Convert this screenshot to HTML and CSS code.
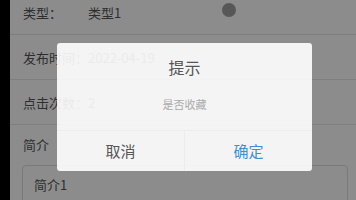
FILE: index.html
```html
<!DOCTYPE html>
<html lang="zh">
<head>
    <meta charset="UTF-8">
    <meta name="viewport" content="width=device-width, initial-scale=1.0">
    <title>详情</title>
    <link rel="stylesheet" href="styles.css">
</head>
<body>
    <div class="page">
        <div class="info">
            <div class="row">
                <span class="label">类型：</span>
                <span class="value">类型1</span>
            </div>
            <div class="row">
                <span class="label">发布时间：</span>
                <span class="value">2022-04-19</span>
            </div>
            <div class="row">
                <span class="label">点击次数：</span>
                <span class="value">2</span>
            </div>
        </div>

        <div class="intro-title">简介</div>
        <div class="intro-box">简介1</div>

        <!-- 遮罩 -->
        <div class="mask"></div>
        <div class="dot"></div>

        <!-- 弹窗 -->
        <div class="dialog">
            <div class="dialog-title">提示</div>
            <div class="dialog-msg">是否收藏</div>
            <div class="dialog-btns">
                <div class="btn btn-cancel">取消</div>
                <div class="btn btn-ok">确定</div>
            </div>
        </div>
    </div>
</body>
</html>
```

FILE: styles.css
```css
body {
    margin: 0;
    background-color: #000;
    font-family: "Noto Sans CJK SC", "Noto Sans", sans-serif;
    overflow: hidden;
}

.page {
    position: relative;
    margin-left: 10px;
    height: 200px;
    background: #fff;
    overflow: hidden;
}

.info {
    margin-top: -10px;
}

.row {
    display: flex;
    align-items: center;
    height: 44px;
    padding-left: 13px;
    border-bottom: 1px solid #e6e6e6;
    font-size: 13px;
    color: #555;
}

.label {
    width: 65px;
    white-space: nowrap;
}

.intro-title {
    height: 40px;
    line-height: 40px;
    padding-left: 13px;
    font-size: 13px;
    color: #555;
}

.intro-box {
    margin: 0 8px 0 12px;
    height: 60px;
    padding: 9px 11px;
    border: 1px solid #dcdcdc;
    border-radius: 4px;
    font-size: 13px;
    color: #555;
    box-sizing: border-box;
}

.mask {
    position: absolute;
    top: 0;
    left: 0;
    right: 0;
    bottom: 0;
    background: rgba(0, 0, 0, 0.45);
}

.dot {
    position: absolute;
    top: 3px;
    left: 212px;
    width: 14px;
    height: 14px;
    border-radius: 50%;
    background: #575757;
}

.dialog {
    position: absolute;
    top: 43px;
    left: 47px;
    width: 255px;
    height: 128px;
    display: flex;
    flex-direction: column;
    background: rgba(255, 255, 255, 0.9);
    border-radius: 3px;
    text-align: center;
}

.dialog-title {
    padding-top: 13px;
    line-height: 22px;
    font-size: 16px;
    color: #555;
}

.dialog-msg {
    margin-top: 16px;
    line-height: 20px;
    font-size: 11px;
    color: #aaa;
}

.dialog-btns {
    display: flex;
    margin-top: auto;
    height: 40px;
    border-top: 1px solid #ececec;
}

.btn {
    flex: 1;
    line-height: 40px;
    font-size: 15px;
}

.btn-cancel {
    color: #555;
    border-right: 1px solid #ececec;
}

.btn-ok {
    color: #3d8fd6;
}
```
